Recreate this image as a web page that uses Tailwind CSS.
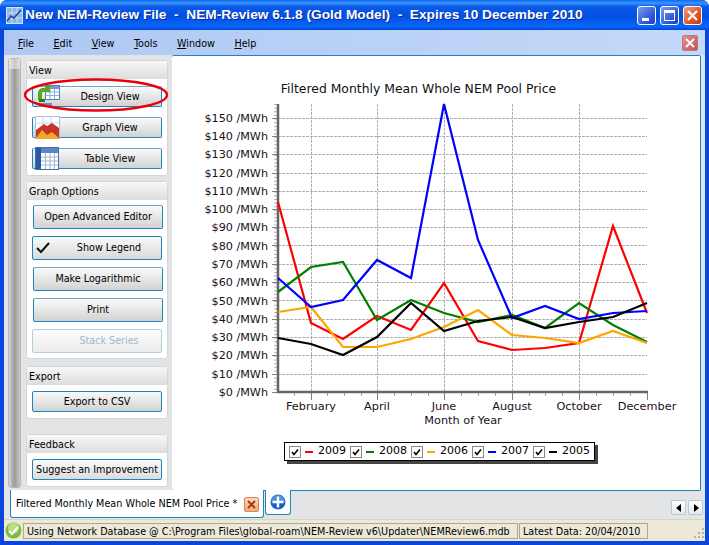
<!DOCTYPE html>
<html lang="en">
<head>
  <meta charset="UTF-8">
  <title>New NEM-Review File</title>
  <script src="https://cdn.jsdelivr.net/npm/@tailwindcss/browser@4"></script>
</head>
<body class="w-[709px] h-[545px] overflow-hidden bg-white font-['DejaVu_Sans_Condensed','Liberation_Sans',sans-serif] text-[10.7px] text-black">
  <div class="relative w-full h-full flex flex-col rounded-t-[7px] overflow-hidden bg-[#0a45dc]">

    <!-- title bar -->
    <div class="h-[30px] shrink-0 flex items-center pl-[6px] pr-[7px] bg-[linear-gradient(180deg,#0a6af0_0%,#3d95ff_10%,#0a5ae8_22%,#0250e4_55%,#0a66f8_88%,#0058ee_94%,#0340cc_100%)]">
      <svg width="17" height="17" viewBox="0 0 17 17" class="shrink-0">
        <rect x="0.5" y="0.5" width="16" height="16" fill="#8fb4e6" stroke="#d4e2f6"/>
        <path d="M1 6h15M1 11h15M6 1v15M11 1v15" stroke="#c8dcf5"/>
        <path d="M1 14l4-5 3 2 7-8" fill="none" stroke="#204a9a" stroke-width="1.6"/>
      </svg>
      <span class="ml-[2px] font-['Liberation_Sans',sans-serif] font-bold text-[13.7px] text-white whitespace-pre [text-shadow:1px_1px_0_#0a2a90]">New NEM-Review File  -  NEM-Review 6.1.8 (Gold Model)  -  Expires 10 December 2010</span>
      <div class="ml-auto flex gap-[4px]">
        <div class="w-[19px] h-[19px] rounded-[3px] border border-white bg-[linear-gradient(135deg,#7d9df0,#2a55d8_70%,#1d3fc0)] flex items-end pl-[4px] pb-[3px]"><div class="w-[7px] h-[3px] bg-white"></div></div>
        <div class="w-[19px] h-[19px] rounded-[3px] border border-white bg-[linear-gradient(135deg,#7d9df0,#2a55d8_70%,#1d3fc0)] flex items-center justify-center"><div class="w-[11px] h-[11px] border border-white border-t-[3px]"></div></div>
        <div class="w-[19px] h-[19px] rounded-[3px] border border-white bg-[linear-gradient(135deg,#f0a080,#e0552a_60%,#c03a10)] flex items-center justify-center">
          <svg width="11" height="11" viewBox="0 0 11 11"><path d="M1 1l9 9M10 1l-9 9" stroke="#fff" stroke-width="2.2"/></svg>
        </div>
      </div>
    </div>

    <div class="flex-1 mx-[4px] mb-[4px] flex flex-col min-h-0 bg-[#e3e4e6]">

      <!-- menu bar -->
      <div class="h-[25px] shrink-0 flex items-center pl-[14px] pr-[7px] gap-[19.5px] bg-[linear-gradient(90deg,#aec8f3,#c4d9f9)]">
        <span class="mt-[3px]"><u>F</u>ile</span>
        <span class="mt-[3px]"><u>E</u>dit</span>
        <span class="mt-[3px]"><u>V</u>iew</span>
        <span class="mt-[3px]"><u>T</u>ools</span>
        <span class="mt-[3px]"><u>W</u>indow</span>
        <span class="mt-[3px]"><u>H</u>elp</span>
        <div class="ml-auto w-[16px] h-[16px] rounded-[2px] border border-[#b87878] bg-[linear-gradient(135deg,#e89090,#c85050)] flex items-center justify-center">
          <svg width="10" height="10" viewBox="0 0 10 10"><path d="M1 1l8 8M9 1l-8 8" stroke="#fff" stroke-width="1.8"/></svg>
        </div>
      </div>

      <!-- body row -->
      <div class="h-[436px] shrink-0 flex">
        <!-- splitter -->
        <div class="w-[18px] shrink-0 pl-[4px] pt-[3px] pb-[3px]">
          <div class="h-full w-[13px] rounded-[3px] border border-[#b8b8b8] bg-[linear-gradient(90deg,#d8d8d8,#a8a8a8_35%,#9c9c9c_55%,#c8c8c8)]">
            <div class="h-[10px] bg-[linear-gradient(90deg,#e8e8e8,#c8c8c8_50%,#e0e0e0)]"></div>
          </div>
        </div>

        <!-- side panel -->
        <div class="w-[150px] shrink-0 px-[4px] pt-[5px] flex flex-col bg-[#e2e4e6]">
          <div class="h-[116px] shrink-0 rounded-[3px] border border-[#d6d6d6] bg-white">
            <div class="h-[18px] pl-[2px] leading-[20px] bg-[linear-gradient(180deg,#f8f8f8,#dcdcdc)]">View</div>
            <div class="pt-[7px] pl-[5px] flex flex-col gap-[10px]">
              <button class="relative w-[130px] h-[21px] pt-[1px] rounded-[2px] border border-[#1d84bc] border-t-[#6fa6c8] bg-[linear-gradient(180deg,#fafafa,#d2d2d2)] pl-[26px] text-center">Design View
                <svg width="22" height="23" viewBox="0 0 22 23" class="absolute left-[5px] top-[-2px]">
                  <rect x="7.5" y="0.5" width="14" height="14" fill="#fff" stroke="#5a7fb8"/>
                  <rect x="8" y="1" width="13" height="3" fill="#6f97d0"/>
                  <path d="M8 7h13M8 10.5h13M12 4v10M16.500 4v10" stroke="#8fb0dc"/>
                  <path d="M2 15V8a3 3 0 0 1 3-3h5V1" fill="none" stroke="#58a820" stroke-width="4"/>
                  <rect x="1" y="14" width="6" height="3" fill="#2c7a10"/>
                  <rect x="0" y="18" width="14" height="4" fill="#6d8ec4"/>
                </svg>
              </button>
              <button class="relative w-[130px] h-[21px] pt-[1px] rounded-[2px] border border-[#1d84bc] border-t-[#6fa6c8] bg-[linear-gradient(180deg,#fafafa,#d2d2d2)] pl-[26px] text-center">Graph View
                <svg width="25" height="23" viewBox="0 0 25 23" class="absolute left-[2px] top-[-2px]">
                  <rect x="0.5" y="0.500" width="24" height="22" fill="#fff" stroke="#a8c0e0"/>
                  <path d="M0 7h24M0 14h24M8 0v22M16 0v22" stroke="#c4d6ee"/>
                  <path d="M1 14l8-6 3 2 5-3 7 5v10H1z" fill="#c8342a"/>
                  <path d="M1 22l6-8 5 5 5-3 7 6v1H1z" fill="#f0a828"/>
                </svg>
              </button>
              <button class="relative w-[130px] h-[21px] pt-[1px] rounded-[2px] border border-[#1d84bc] border-t-[#6fa6c8] bg-[linear-gradient(180deg,#fafafa,#d2d2d2)] pl-[26px] text-center">Table View
                <svg width="24" height="23" viewBox="0 0 24 23" class="absolute left-[2px] top-[-2px]">
                  <rect x="0.5" y="0.5" width="23" height="22" fill="#fff" stroke="#4a70a8"/>
                  <rect x="1" y="1" width="22" height="5" fill="#5a84c4"/>
                  <rect x="1" y="1" width="5" height="21" fill="#2a58a4"/>
                  <path d="M6 10h17M6 14h17M6 18h17M10.500 6v16M15 6v16M19.500 6v16" stroke="#9cb8dc"/>
                </svg>
              </button>
            </div>
          </div>

          <div class="mt-[5px] h-[178px] shrink-0 rounded-[3px] border border-[#d6d6d6] bg-white">
            <div class="h-[18px] pl-[2px] leading-[19px] bg-[linear-gradient(180deg,#f8f8f8,#dcdcdc)]">Graph Options</div>
            <div class="pt-[5px] pl-[6px] flex flex-col gap-[7px]">
              <button class="w-[130px] h-[24px] pt-[1px] rounded-[2px] border border-[#1d84bc] border-t-[#6fa6c8] bg-[linear-gradient(180deg,#fafafa,#d2d2d2)]">Open Advanced Editor</button>
              <button class="relative ml-[-1px] w-[130px] h-[24px] pt-[1px] rounded-[2px] border border-[#1d84bc] bg-[linear-gradient(180deg,#fafafa,#d8d8d8)] pl-[24px]">Show Legend
                <svg width="14" height="12" viewBox="0 0 14 12" class="absolute left-[3px] top-[5px]"><path d="M1 6l4 4 8-9" fill="none" stroke="#111" stroke-width="2"/></svg>
              </button>
              <button class="w-[130px] h-[24px] pt-[1px] rounded-[2px] border border-[#1d84bc] border-t-[#6fa6c8] bg-[linear-gradient(180deg,#fafafa,#d2d2d2)]">Make Logarithmic</button>
              <button class="w-[130px] h-[24px] pt-[1px] rounded-[2px] border border-[#1d84bc] border-t-[#6fa6c8] bg-[linear-gradient(180deg,#fafafa,#d2d2d2)]">Print</button>
              <button class="ml-[-1px] w-[130px] h-[24px] pt-[1px] rounded-[2px] border border-[#b4d0e0] bg-[linear-gradient(180deg,#fcfcfc,#ececec)] pl-[24px] text-[#a0b8c8]">Stack Series</button>
            </div>
          </div>

          <div class="mt-[7px] h-[53px] shrink-0 rounded-[3px] border border-[#d6d6d6] bg-white">
            <div class="h-[18px] pl-[2px] leading-[20px] bg-[linear-gradient(180deg,#f8f8f8,#dcdcdc)]">Export</div>
            <div class="pt-[6px] pl-[5px]">
              <button class="w-[130px] h-[21px] pt-[1px] rounded-[2px] border border-[#1d84bc] bg-[linear-gradient(180deg,#fafafa,#d2d2d2)]">Export to CSV</button>
            </div>
          </div>

          <div class="mt-[15px] h-[53px] shrink-0 rounded-[3px] border border-[#d6d6d6] bg-white">
            <div class="h-[18px] pl-[2px] leading-[20px] bg-[linear-gradient(180deg,#f8f8f8,#dcdcdc)]">Feedback</div>
            <div class="pt-[6px] pl-[5px]">
              <button class="w-[130px] h-[21px] pt-[1px] rounded-[2px] border border-[#1d84bc] bg-[linear-gradient(180deg,#fafafa,#dcdcdc)] whitespace-nowrap">Suggest an Improvement</button>
            </div>
          </div>
        </div>

        <!-- chart document -->
        <div class="w-[529px] shrink-0 border-r border-b border-t border-[#1d84bc] rounded-[2px] bg-white flex flex-col">
          <svg width="528" height="375" viewBox="172 56 528 375" class="shrink-0 font-['DejaVu_Sans',sans-serif]" fill="#1a1020" font-size="11.300">
            <text x="418.500" y="93" text-anchor="middle" font-size="12.400" fill="#111">Filtered Monthly Mean Whole NEM Pool Price</text>

            <!-- gridlines -->
            <path d="M278 118.500H647M278 136.500H647M278 154.500H647M278 173.500H647M278 191.500H647M278 209.500H647M278 227.500H647M278 245.500H647M278 264.500H647M278 282.500H647M278 300.500H647M278 319.500H647M278 337.500H647M278 355.500H647M278 374.500H647" stroke="#b0b0b0" stroke-dasharray="3 1" fill="none"/>
            <path d="M311.500 104V392M377.500 104V392M444.500 104V392M512.500 104V392M579.500 104V392" stroke="#b0b0b0" stroke-dasharray="3 1" fill="none"/>

            <!-- ticks -->
            <path d="M275.500 104V392" stroke="#b0b0b0" stroke-width="3" stroke-dasharray="1 2.650" fill="none"/>
            <path d="M272 118.500h5M272 136.500h5M272 154.500h5M272 173.500h5M272 191.500h5M272 209.500h5M272 227.500h5M272 245.500h5M272 264.500h5M272 282.500h5M272 300.500h5M272 319.500h5M272 337.500h5M272 355.500h5M272 374.500h5M272 392.500h5" stroke="#808080" fill="none"/>
            <path d="M311.500 392v8M377.500 392v8M444.500 392v8M512.500 392v8M579.500 392v8M647.500 392v8" stroke="#808080" fill="none"/>
            <path d="M294.500 392v4M327.500 392v4M344.500 392v4M361.500 392v4M394.500 392v4M411.500 392v4M428.500 392v4M461.500 392v4M478.500 392v4M495.500 392v4M529.500 392v4M545.500 392v4M562.500 392v4M596.500 392v4M613.500 392v4M630.500 392v4" stroke="#a0a0a0" fill="none"/>

            <!-- axes -->
            <path d="M278 104V392H648" stroke="#666" stroke-width="2.500" fill="none"/>

            <!-- y labels -->
            <g text-anchor="end" font-size="11.200">
              <text x="268" y="122">$150 /MWh</text>
              <text x="268" y="140">$140 /MWh</text>
              <text x="268" y="158">$130 /MWh</text>
              <text x="268" y="177">$120 /MWh</text>
              <text x="268" y="195">$110 /MWh</text>
              <text x="268" y="213">$100 /MWh</text>
              <text x="268" y="231">$90 /MWh</text>
              <text x="268" y="250">$80 /MWh</text>
              <text x="268" y="268">$70 /MWh</text>
              <text x="268" y="286">$60 /MWh</text>
              <text x="268" y="305">$50 /MWh</text>
              <text x="268" y="323">$40 /MWh</text>
              <text x="268" y="341">$30 /MWh</text>
              <text x="268" y="359">$20 /MWh</text>
              <text x="268" y="378">$10 /MWh</text>
              <text x="268" y="396">$0 /MWh</text>
            </g>

            <!-- x labels -->
            <g text-anchor="middle">
              <text x="311" y="410">February</text>
              <text x="377" y="410">April</text>
              <text x="444" y="410">June</text>
              <text x="512" y="410">August</text>
              <text x="579" y="410">October</text>
              <text x="647" y="410">December</text>
              <text x="463" y="424">Month of Year</text>
            </g>

            <!-- series -->
            <g fill="none" stroke-width="2.200" stroke-linejoin="miter">
              <polyline stroke="#ff0000" points="278,202 311,323 343,339 377,316 411,330 444,283 478,341 512,350 545,348 579,343 613,226 647,313"/>
              <polyline stroke="#008000" points="278,292 311,267 343,262 377,320 411,300 444,313 478,322 512,315 545,328 579,303 613,325 647,342"/>
              <polyline stroke="#ffa500" points="278,312 311,307 343,347 377,347 411,339 444,327 478,310 512,335 545,338 579,343 613,331 647,343"/>
              <polyline stroke="#0000ff" points="278,278 311,307 343,300 377,260 411,278 444,104 478,240 512,318 545,306 579,319 613,313 647,311"/>
              <polyline stroke="#000000" points="278,338 311,344 343,355 377,337 411,303 444,331 478,321 512,317 545,328 579,322 613,317 647,303"/>
            </g>
          </svg>

          <!-- legend -->
          <div class="ml-[112px] mt-[11px] w-[311px] h-[19px] border border-black bg-white shadow-[3px_3px_0_#444] flex items-center pl-[4px] font-['DejaVu_Sans',sans-serif] text-[11px]">
            <div class="w-[61px] flex items-center shrink-0">
              <span class="w-[12px] h-[12px] border border-[#8a8a7a] flex items-center justify-center"><svg width="8" height="8" viewBox="0 0 8 8"><path d="M1 4l2 2.500 4-5" fill="none" stroke="#000" stroke-width="1.600"/></svg></span>
              <span class="ml-[4px] w-[8px] h-[2px] bg-[#ff0000]"></span>
              <span class="ml-[5px]">2009</span>
            </div>
            <div class="w-[61px] flex items-center shrink-0">
              <span class="w-[12px] h-[12px] border border-[#8a8a7a] flex items-center justify-center"><svg width="8" height="8" viewBox="0 0 8 8"><path d="M1 4l2 2.500 4-5" fill="none" stroke="#000" stroke-width="1.600"/></svg></span>
              <span class="ml-[4px] w-[8px] h-[2px] bg-[#008000]"></span>
              <span class="ml-[5px]">2008</span>
            </div>
            <div class="w-[61px] flex items-center shrink-0">
              <span class="w-[12px] h-[12px] border border-[#8a8a7a] flex items-center justify-center"><svg width="8" height="8" viewBox="0 0 8 8"><path d="M1 4l2 2.500 4-5" fill="none" stroke="#000" stroke-width="1.600"/></svg></span>
              <span class="ml-[4px] w-[8px] h-[2px] bg-[#ffa500]"></span>
              <span class="ml-[5px]">2006</span>
            </div>
            <div class="w-[61px] flex items-center shrink-0">
              <span class="w-[12px] h-[12px] border border-[#8a8a7a] flex items-center justify-center"><svg width="8" height="8" viewBox="0 0 8 8"><path d="M1 4l2 2.500 4-5" fill="none" stroke="#000" stroke-width="1.600"/></svg></span>
              <span class="ml-[4px] w-[8px] h-[2px] bg-[#0000ff]"></span>
              <span class="ml-[5px]">2007</span>
            </div>
            <div class="w-[61px] flex items-center shrink-0">
              <span class="w-[12px] h-[12px] border border-[#8a8a7a] flex items-center justify-center"><svg width="8" height="8" viewBox="0 0 8 8"><path d="M1 4l2 2.500 4-5" fill="none" stroke="#000" stroke-width="1.600"/></svg></span>
              <span class="ml-[4px] w-[8px] h-[2px] bg-[#000000]"></span>
              <span class="ml-[5px]">2005</span>
            </div>
          </div>
        </div>
      </div>

      <!-- tab strip -->
      <div class="h-[28px] shrink-0 flex items-start pl-[6px] pr-[2px]">
        <div class="w-[254px] h-[28px] shrink-0 mt-[-1px] flex items-center pl-[5px] pt-[1px] bg-white border border-t-0 border-[#1d84bc] rounded-b-[3px]">
          <span class="mt-[1px] whitespace-nowrap">Filtered Monthly Mean Whole NEM Pool Price *</span>
          <div class="ml-auto mr-[4px] w-[15px] h-[15px] rounded-[2px] border border-[#d08858] bg-[linear-gradient(180deg,#ffd8b8,#f8a878)] flex items-center justify-center">
            <svg width="9" height="9" viewBox="0 0 9 9"><path d="M1 1l7 7M8 1l-7 7" stroke="#a03818" stroke-width="1.800"/></svg>
          </div>
        </div>
        <div class="ml-[1px] w-[26px] h-[25px] shrink-0 mt-[-1px] flex items-center justify-center bg-white border border-t-0 border-[#1d84bc] rounded-b-[3px]">
          <svg width="16" height="16" viewBox="0 0 16 16">
            <circle cx="8" cy="8" r="7.500" fill="#1f5fc0"/>
            <path d="M1 8a7 7 0 0 1 14 0z" fill="#4a90e0"/>
            <path d="M8 2.500v11M2.500 8h11" stroke="#fff" stroke-width="2.400"/>
          </svg>
        </div>
        <div class="ml-auto mt-[9px] flex gap-[2px]">
          <div class="w-[15px] h-[15px] rounded-[2px] border border-[#a8cce4] bg-[linear-gradient(180deg,#fff,#e8e8e8)] flex items-center justify-center">
            <svg width="6" height="8" viewBox="0 0 6 8"><path d="M5 0v8L0 4z" fill="#000"/></svg>
          </div>
          <div class="w-[15px] h-[15px] rounded-[2px] border border-[#a8cce4] bg-[linear-gradient(180deg,#fff,#e8e8e8)] flex items-center justify-center">
            <svg width="6" height="8" viewBox="0 0 6 8"><path d="M1 0v8l5-4z" fill="#000"/></svg>
          </div>
        </div>
      </div>

      <!-- status bar -->
      <div class="flex-1 flex items-center bg-[#ece9d8] border-t border-[#d8d4c0] pl-[1px]">
        <svg width="17" height="17" viewBox="0 0 17 17" class="shrink-0">
          <circle cx="8.500" cy="8.500" r="8" fill="#7cbc3c"/>
          <circle cx="8.500" cy="6" r="5.500" fill="#b8e080"/>
          <path d="M4 9l3 3 6-7" fill="none" stroke="#fff" stroke-width="2"/>
        </svg>
        <div class="ml-[1px] w-[495px] h-[16px] shrink-0 leading-[15px] pl-[3px] border border-[#aca899] whitespace-nowrap overflow-hidden">Using Network Database @ C:\Program Files\global-roam\NEM-Review v6\Updater\NEMReview6.mdb</div>
        <div class="ml-[1px] w-[129px] h-[16px] shrink-0 leading-[15px] pl-[3px] border border-[#aca899] whitespace-nowrap overflow-hidden">Latest Data: 20/04/2010</div>
        <svg width="11" height="11" viewBox="0 0 11 11" class="ml-auto mt-[5px] shrink-0" fill="#b8b4a0"><path d="M8 0h2v2H8zM4 4h2v2H4zM8 4h2v2H8zM0 8h2v2H0zM4 8h2v2H4zM8 8h2v2H8z"/></svg>
      </div>
    </div>

    <!-- red marker ring round Design View -->
    <svg width="146" height="34" viewBox="0 0 146 34" class="absolute left-[23px] top-[78px]">
      <ellipse cx="73" cy="17" rx="71" ry="15.500" fill="none" stroke="#e8000c" stroke-width="2.400"/>
    </svg>
  </div>
</body>
</html>
